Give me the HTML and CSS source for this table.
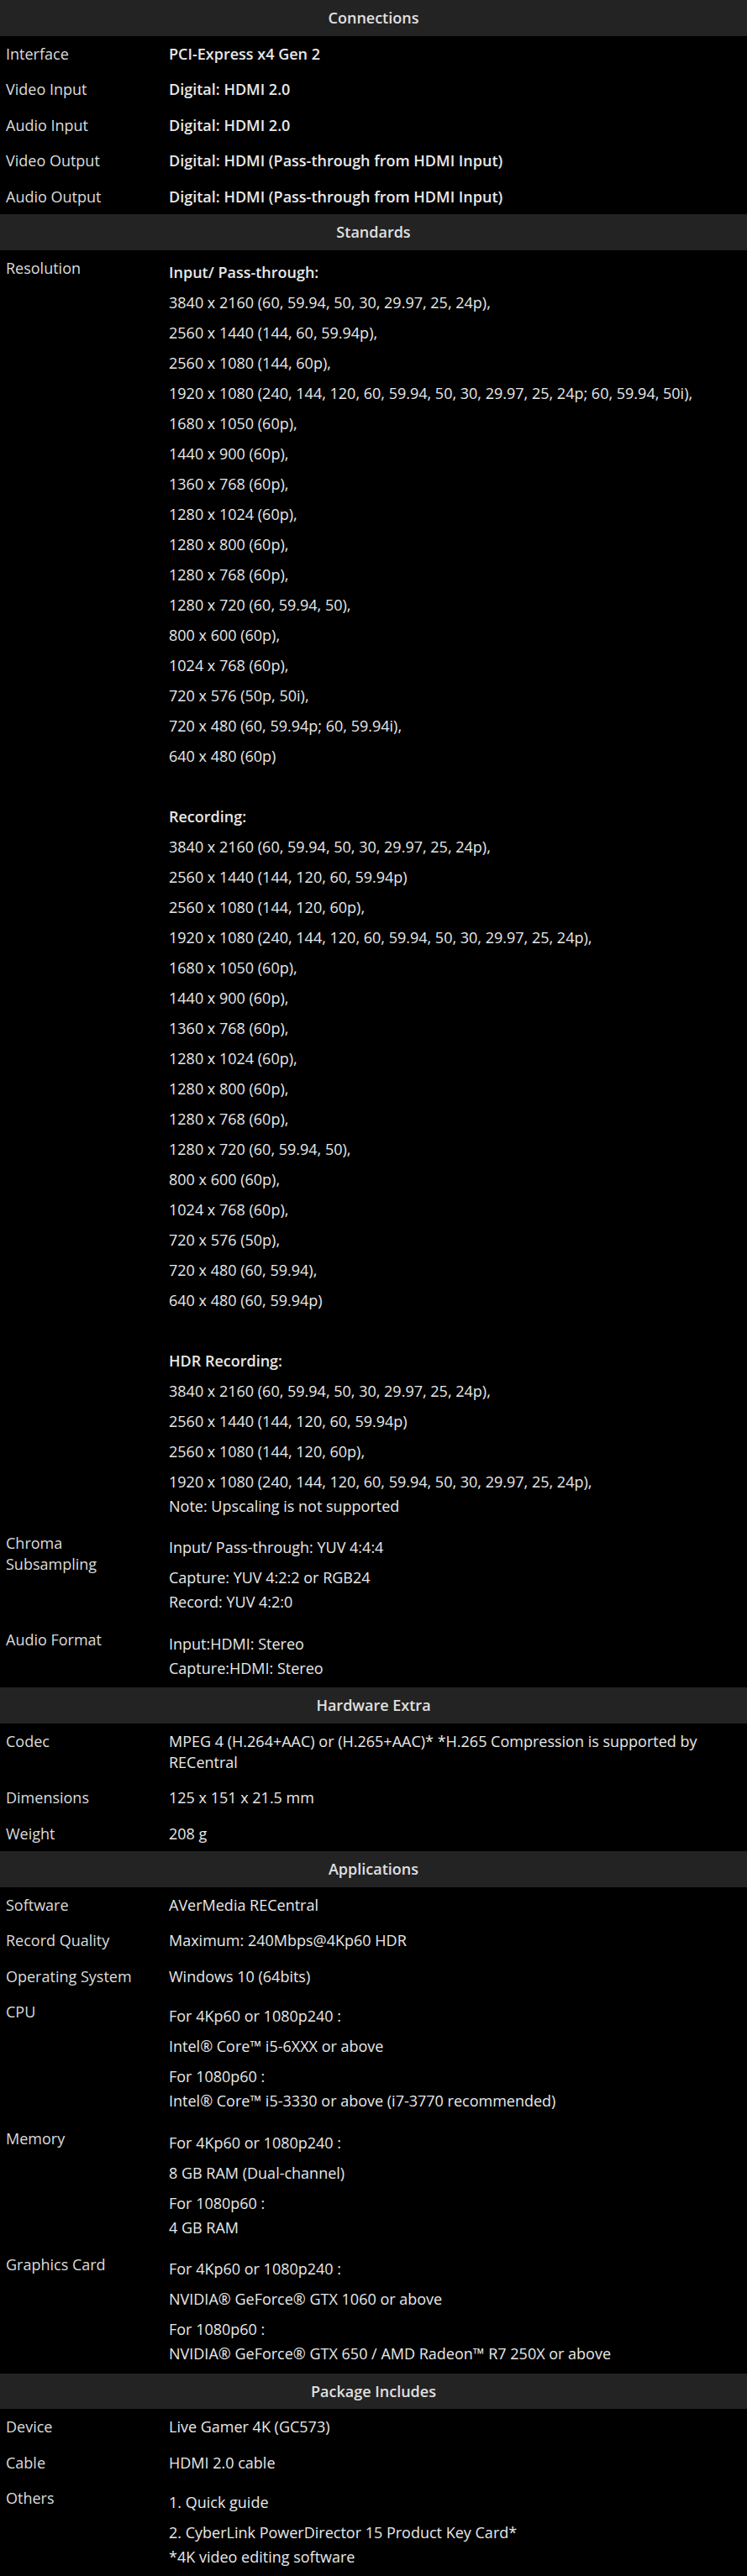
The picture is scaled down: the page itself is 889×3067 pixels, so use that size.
FILE: index.html
```html
<!DOCTYPE html>
<html>
<head>
<meta charset="utf-8">
<link rel="stylesheet" href="styles.css">
</head>
<body>
<div class="spec">
  <div class="sec-head">Connections</div>
  <div class="row"><div class="lbl">Interface</div><div class="val strong">PCI-Express x4 Gen 2</div></div>
  <div class="row"><div class="lbl">Video Input</div><div class="val strong">Digital: HDMI 2.0</div></div>
  <div class="row"><div class="lbl">Audio Input</div><div class="val strong">Digital: HDMI 2.0</div></div>
  <div class="row"><div class="lbl">Video Output</div><div class="val strong">Digital: HDMI (Pass-through from HDMI Input)</div></div>
  <div class="row"><div class="lbl">Audio Output</div><div class="val strong">Digital: HDMI (Pass-through from HDMI Input)</div></div>

  <div class="sec-head">Standards</div>
  <div class="row">
    <div class="lbl">Resolution</div>
    <div class="val multi">
      <p><b>Input/ Pass-through:</b></p>
      <p>3840 x 2160 (60, 59.94, 50, 30, 29.97, 25, 24p),</p>
      <p>2560 x 1440 (144, 60, 59.94p),</p>
      <p>2560 x 1080 (144, 60p),</p>
      <p>1920 x 1080 (240, 144, 120, 60, 59.94, 50, 30, 29.97, 25, 24p; 60, 59.94, 50i),</p>
      <p>1680 x 1050 (60p),</p>
      <p>1440 x 900 (60p),</p>
      <p>1360 x 768 (60p),</p>
      <p>1280 x 1024 (60p),</p>
      <p>1280 x 800 (60p),</p>
      <p>1280 x 768 (60p),</p>
      <p>1280 x 720 (60, 59.94, 50),</p>
      <p>800 x 600 (60p),</p>
      <p>1024 x 768 (60p),</p>
      <p>720 x 576 (50p, 50i),</p>
      <p>720 x 480 (60, 59.94p; 60, 59.94i),</p>
      <p>640 x 480 (60p)</p>
      <p>&nbsp;</p>
      <p><b>Recording:</b></p>
      <p>3840 x 2160 (60, 59.94, 50, 30, 29.97, 25, 24p),</p>
      <p>2560 x 1440 (144, 120, 60, 59.94p)</p>
      <p>2560 x 1080 (144, 120, 60p),</p>
      <p>1920 x 1080 (240, 144, 120, 60, 59.94, 50, 30, 29.97, 25, 24p),</p>
      <p>1680 x 1050 (60p),</p>
      <p>1440 x 900 (60p),</p>
      <p>1360 x 768 (60p),</p>
      <p>1280 x 1024 (60p),</p>
      <p>1280 x 800 (60p),</p>
      <p>1280 x 768 (60p),</p>
      <p>1280 x 720 (60, 59.94, 50),</p>
      <p>800 x 600 (60p),</p>
      <p>1024 x 768 (60p),</p>
      <p>720 x 576 (50p),</p>
      <p>720 x 480 (60, 59.94),</p>
      <p>640 x 480 (60, 59.94p)</p>
      <p>&nbsp;</p>
      <p><b>HDR Recording:</b></p>
      <p>3840 x 2160 (60, 59.94, 50, 30, 29.97, 25, 24p),</p>
      <p>2560 x 1440 (144, 120, 60, 59.94p)</p>
      <p>2560 x 1080 (144, 120, 60p),</p>
      <p>1920 x 1080 (240, 144, 120, 60, 59.94, 50, 30, 29.97, 25, 24p),<br>Note: Upscaling is not supported</p>
    </div>
  </div>
  <div class="row">
    <div class="lbl">Chroma Subsampling</div>
    <div class="val multi">
      <p>Input/ Pass-through: YUV 4:4:4</p>
      <p>Capture: YUV 4:2:2 or RGB24<br>Record: YUV 4:2:0</p>
    </div>
  </div>
  <div class="row">
    <div class="lbl">Audio Format</div>
    <div class="val multi">
      <p>Input:HDMI: Stereo<br>Capture:HDMI: Stereo</p>
    </div>
  </div>

  <div class="sec-head">Hardware Extra</div>
  <div class="row"><div class="lbl">Codec</div><div class="val">MPEG 4 (H.264+AAC) or (H.265+AAC)* *H.265 Compression is supported by RECentral</div></div>
  <div class="row"><div class="lbl">Dimensions</div><div class="val">125 x 151 x 21.5 mm</div></div>
  <div class="row"><div class="lbl">Weight</div><div class="val">208 g</div></div>

  <div class="sec-head">Applications</div>
  <div class="row"><div class="lbl">Software</div><div class="val">AVerMedia RECentral</div></div>
  <div class="row"><div class="lbl">Record Quality</div><div class="val">Maximum: 240Mbps@4Kp60 HDR</div></div>
  <div class="row"><div class="lbl">Operating System</div><div class="val">Windows 10 (64bits)</div></div>
  <div class="row">
    <div class="lbl">CPU</div>
    <div class="val multi">
      <p>For 4Kp60 or 1080p240 :</p>
      <p>Intel® Core™ i5-6XXX or above</p>
      <p>For 1080p60 :<br>Intel® Core™ i5-3330 or above (i7-3770 recommended)</p>
    </div>
  </div>
  <div class="row">
    <div class="lbl">Memory</div>
    <div class="val multi">
      <p>For 4Kp60 or 1080p240 :</p>
      <p>8 GB RAM (Dual-channel)</p>
      <p>For 1080p60 :<br>4 GB RAM</p>
    </div>
  </div>
  <div class="row">
    <div class="lbl">Graphics Card</div>
    <div class="val multi">
      <p>For 4Kp60 or 1080p240 :</p>
      <p>NVIDIA® GeForce® GTX 1060 or above</p>
      <p>For 1080p60 :<br>NVIDIA® GeForce® GTX 650 / AMD Radeon™ R7 250X or above</p>
    </div>
  </div>

  <div class="sec-head">Package Includes</div>
  <div class="row"><div class="lbl">Device</div><div class="val">Live Gamer 4K (GC573)</div></div>
  <div class="row"><div class="lbl">Cable</div><div class="val">HDMI 2.0 cable</div></div>
  <div class="row">
    <div class="lbl">Others</div>
    <div class="val multi">
      <p>1. Quick guide</p>
      <p>2. CyberLink PowerDirector 15 Product Key Card*<br>*4K video editing software</p>
    </div>
  </div>
</div>
</body>
</html>
```

FILE: styles.css
```css
html, body {
  margin: 0;
  padding: 0;
  background: #000;
}
body {
  font-family: "Open Sans", "Noto Sans", sans-serif;
  font-size: 18px;
  color: #e6e6e6;
}
.spec {
  display: flex;
  flex-direction: column;
}
.sec-head {
  background: #232323;
  color: #e0e0e0;
  font-weight: 600;
  text-align: center;
  height: 42.5px;
  line-height: 42.5px;
}
.row {
  display: grid;
  grid-template-columns: 201px 1fr;
  padding: 9px 0 8.5px;
}
.lbl {
  padding: 0 20px 0 7px;
  line-height: 25px;
  color: #dcdcdc;
}
.val {
  line-height: 25px;
  color: #e8e8e8;
  padding-right: 4px;
}
.val.strong {
  font-weight: 600;
}
.val.multi p {
  margin: 0 0 7px;
  line-height: 29px;
}
.val.multi p:first-child {
  margin-top: 3px;
}
.val.multi p:last-child {
  margin-bottom: 0;
}
.val b {
  font-weight: 600;
}
```
